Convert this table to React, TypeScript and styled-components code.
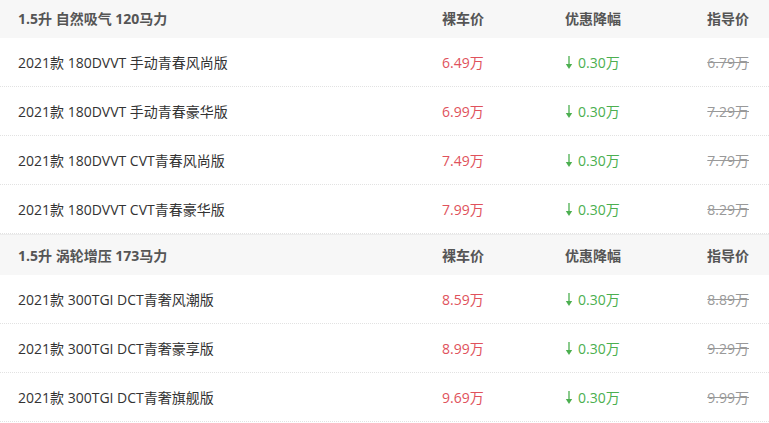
import React from "react";
import styled, { createGlobalStyle } from "styled-components";

const Global = createGlobalStyle`
  html, body { margin: 0; padding: 0; background: #fff; overflow: hidden; }
  body { font-family: "Open Sans", "Noto Sans CJK SC", sans-serif; }
`;

const Table = styled.div`
  margin-top: -3px;
  width: 769px;
`;

const Grid = styled.div`
  display: grid;
  grid-template-columns: 424px 123px 1fr auto;
  align-items: center;
  padding: 0 20px 0 18px;
  font-size: 14px;
`;

const GroupHead = styled(Grid)`
  height: 40px;
  background: #f7f7f7;
  border-top: 1px solid #ececec;
  color: #555;
  font-weight: bold;
`;

const Row = styled(Grid)`
  height: 48px;
  border-bottom: 1px dotted #e2e2e2;
  color: #333;
`;

const Name = styled.div``;

const Price = styled.div`
  color: #e0525c;
`;

const Discount = styled.div`
  color: #4caf50;
  display: flex;
  align-items: center;
  gap: 5px;
`;

const Arrow = styled.svg`
  width: 8px;
  height: 13px;
`;

const Guide = styled.div`
  color: #999;
  text-align: right;
  text-decoration: line-through;
`;

const HeadRight = styled.div`
  text-align: right;
`;

const groups = [
  {
    title: "1.5升 自然吸气 120马力",
    rows: [
      ["2021款 180DVVT 手动青春风尚版", "6.49万", "6.79万"],
      ["2021款 180DVVT 手动青春豪华版", "6.99万", "7.29万"],
      ["2021款 180DVVT CVT青春风尚版", "7.49万", "7.79万"],
      ["2021款 180DVVT CVT青春豪华版", "7.99万", "8.29万"],
    ],
  },
  {
    title: "1.5升 涡轮增压 173马力",
    rows: [
      ["2021款 300TGI DCT青奢风潮版", "8.59万", "8.89万"],
      ["2021款 300TGI DCT青奢豪享版", "8.99万", "9.29万"],
      ["2021款 300TGI DCT青奢旗舰版", "9.69万", "9.99万"],
    ],
  },
];

export default function App() {
  return (
    <>
      <Global />
      <Table>
        {groups.map((g) => (
          <React.Fragment key={g.title}>
            <GroupHead>
              <Name>{g.title}</Name>
              <div>裸车价</div>
              <div>优惠降幅</div>
              <HeadRight>指导价</HeadRight>
            </GroupHead>
            {g.rows.map((r) => (
              <Row key={r[0]}>
                <Name>{r[0]}</Name>
                <Price>{r[1]}</Price>
                <Discount>
                  <Arrow viewBox="0 0 8 13">
                    <line x1="4" y1="0" x2="4" y2="9" stroke="#4caf50" strokeWidth="1.3" />
                    <path d="M0.8 8 L4 13 L7.2 8 Z" fill="#4caf50" />
                  </Arrow>
                  0.30万
                </Discount>
                <Guide>{r[2]}</Guide>
              </Row>
            ))}
          </React.Fragment>
        ))}
      </Table>
    </>
  );
}
